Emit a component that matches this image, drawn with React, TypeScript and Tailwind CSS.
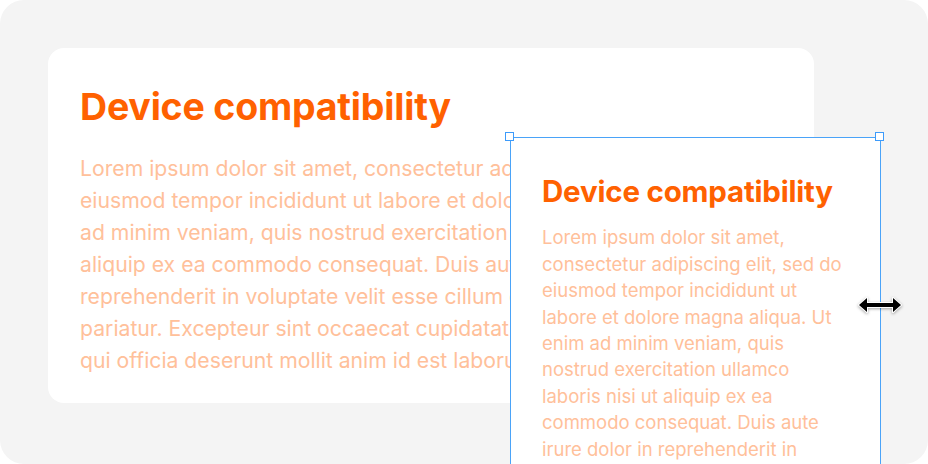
const wideLines = [
  "Lorem ipsum dolor sit amet, consectetur adipiscing elit, sed do",
  "eiusmod tempor incididunt ut labore et dolore magna aliqua. Ut enim",
  "ad minim veniam, quis nostrud exercitation ullamco laboris nisi ut",
  "aliquip ex ea commodo consequat. Duis aute irure dolor in",
  "reprehenderit in voluptate velit esse cillum dolore eu fugiat nulla",
  "pariatur. Excepteur sint occaecat cupidatat non proident, sunt in culpa",
  "qui officia deserunt mollit anim id est laborum.",
];

const narrowLines = [
  "Lorem ipsum dolor sit amet,",
  "consectetur adipiscing elit, sed do",
  "eiusmod tempor incididunt ut",
  "labore et dolore magna aliqua. Ut",
  "enim ad minim veniam, quis",
  "nostrud exercitation ullamco",
  "laboris nisi ut aliquip ex ea",
  "commodo consequat. Duis aute",
  "irure dolor in reprehenderit in",
  "voluptate velit esse cillum dolore",
];

function Handle({ className }: { className: string }) {
  return (
    <span
      className={`absolute h-[9px] w-[9px] border-[1.5px] border-[#3d9bfb] bg-white ${className}`}
    />
  );
}

function ResizeCursor() {
  return (
    <svg
      className="absolute left-[855px] top-[294px]"
      width="50"
      height="22"
      viewBox="0 0 50 22"
      style={{ filter: "drop-shadow(0 1.5px 1.5px rgba(0,0,0,0.35))" }}
    >
      <path
        d="M4 11 L12 4 L12 9 L38 9 L38 4 L46 11 L38 18 L38 13 L12 13 L12 18 Z"
        fill="#000"
        stroke="#fff"
        strokeWidth="2"
        strokeLinejoin="round"
        paintOrder="stroke"
      />
    </svg>
  );
}

export default function App() {
  return (
    <div className="bg-white" style={{ fontFamily: "Inter, 'Noto Sans', sans-serif" }}>
      <div className="relative h-[464px] w-[928px] overflow-hidden rounded-[24px] bg-[#f4f4f4] p-12">
        <div className="flex h-[355px] w-[766px] flex-col rounded-2xl bg-white px-8 pt-9">
          <h1 className="whitespace-nowrap text-[37.5px] font-bold leading-[1.2] tracking-[-0.2px] text-[#ff6100]">
            Device compatibility
          </h1>
          <p className="mt-[23px] whitespace-nowrap text-[21.2px] leading-[32px] text-[#ffc09a]">
            {wideLines.map((l) => (
              <span key={l} className="block">
                {l}
              </span>
            ))}
          </p>
        </div>

        <div className="absolute left-[510px] top-[137px] flex h-[400px] w-[371px] flex-col border border-[#4aa3f8] bg-white px-[31px] pt-[36px]">
          <h2 className="whitespace-nowrap text-[29.5px] font-bold leading-[1.2] tracking-[-0.2px] text-[#ff6100]">
            Device compatibility
          </h2>
          <p className="mt-[15px] whitespace-nowrap text-[18.5px] leading-[26.4px] text-[#ffc09a]">
            {narrowLines.map((l) => (
              <span key={l} className="block">
                {l}
              </span>
            ))}
          </p>
        </div>
        <Handle className="left-[505px] top-[132px]" />
        <Handle className="left-[875px] top-[132px]" />
        <ResizeCursor />
      </div>
    </div>
  );
}
